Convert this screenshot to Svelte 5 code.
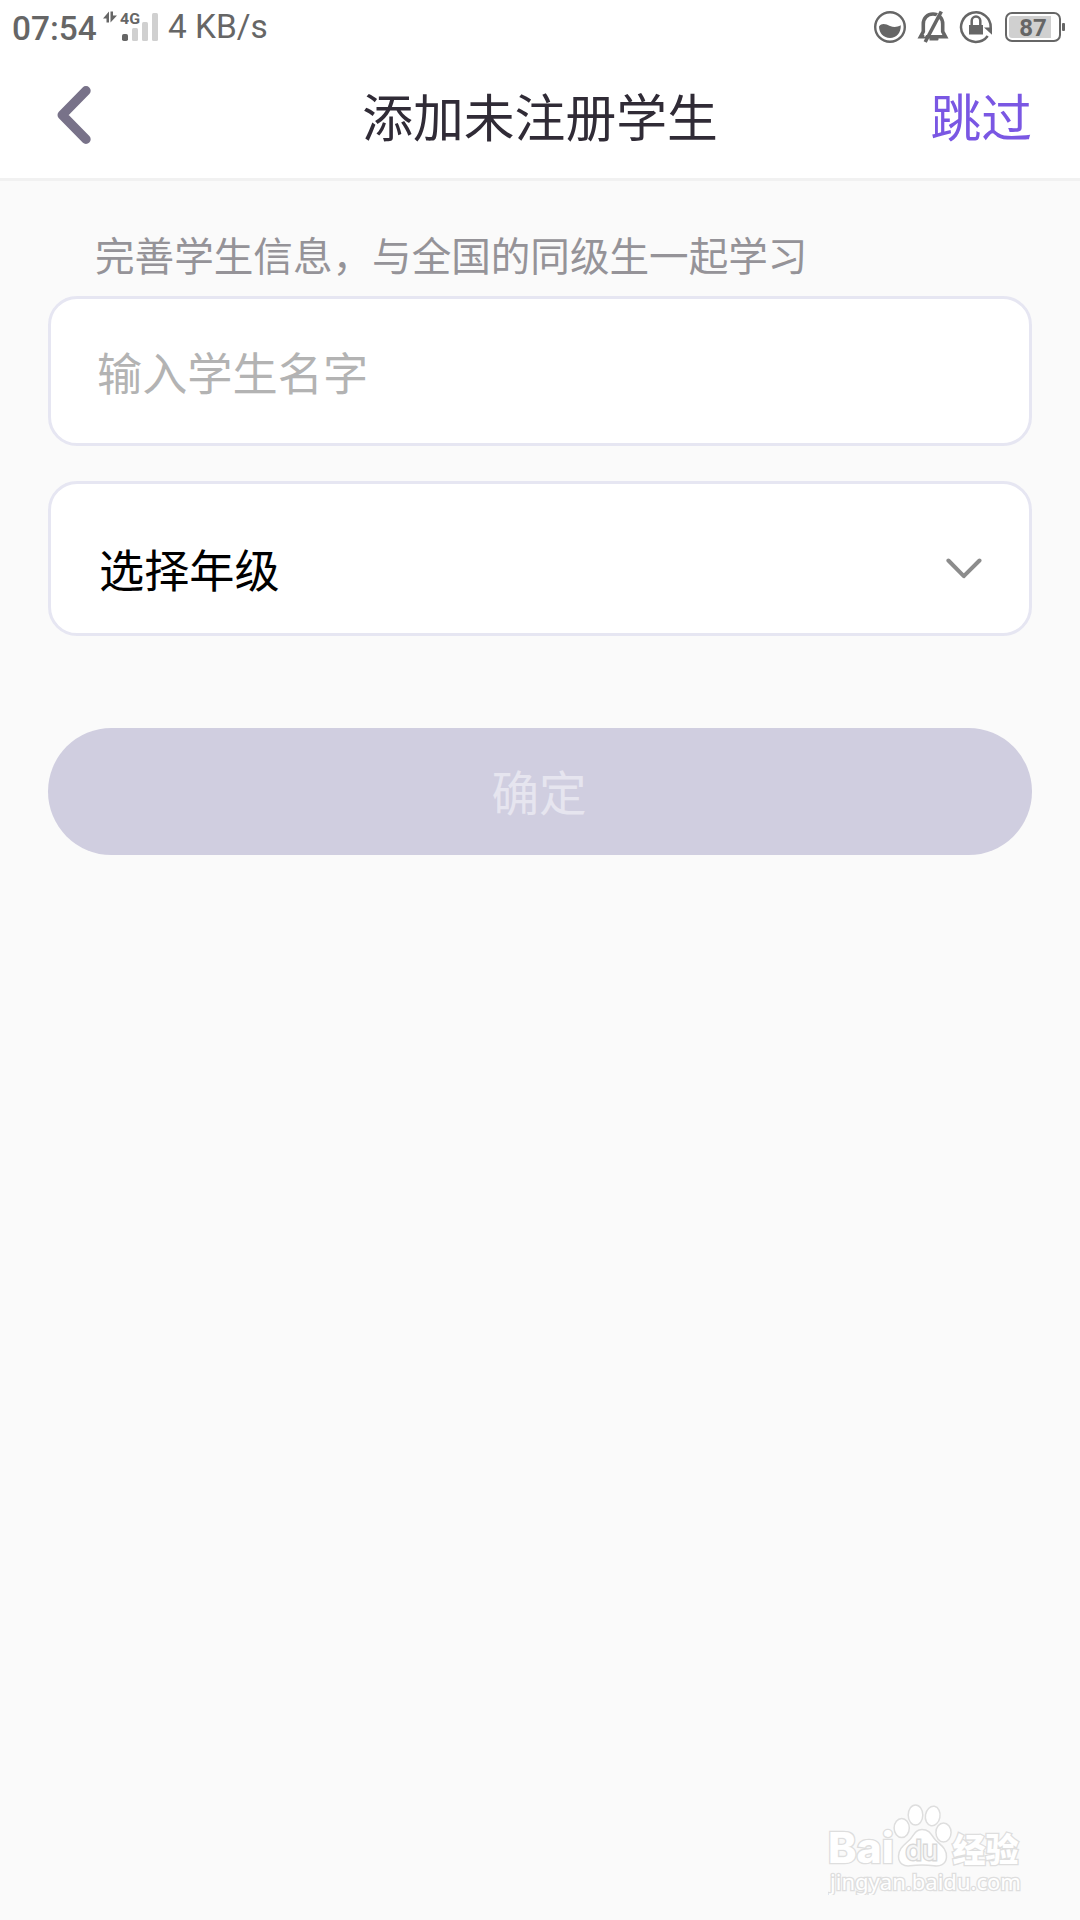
<script lang="ts">
  const title = "添加未注册学生";
  const speed = "4 KB/s";
  const battery = 87;

  let name = $state("");
  const ready = $derived(name.trim().length > 0);
</script>

<div class="screen">
  <div class="status">
    <span class="time">07:54</span>
    <svg class="signal" width="58" height="32" viewBox="0 0 58 32">
      <path d="M7 .5V11.500H4.500V7.500H1zM8.500 .5H11V4.500H15L8.500 11.500z" fill="#666" />
      <text x="18" y="13" class="net" textLength="20" lengthAdjust="spacingAndGlyphs">4G</text>
      <rect x="20" y="23" width="6" height="7" rx="1.8" fill="#666" />
      <rect x="30" y="17" width="6" height="13" rx="1.5" fill="#d0d0d0" />
      <rect x="40" y="11" width="6" height="19" rx="1.5" fill="#d0d0d0" />
      <rect x="50" y="2" width="6" height="28" rx="1.5" fill="#d0d0d0" />
    </svg>
    <span class="speed">{speed}</span>

    <div class="indicators">
      <svg width="34" height="34" viewBox="0 0 34 34">
        <circle cx="17" cy="17" r="14.800" fill="none" stroke="#666" stroke-width="2.400" />
        <path d="M6 16.500C9 12.500 13 14.300 17 16c4 1.600 7 1.200 10.800-.7C28 23 23.500 28 17 28S6 23 6 16.500z" fill="#666" />
      </svg>
      <svg width="34" height="34" viewBox="0 0 34 34">
        <path d="M4.500 26.800L7.300 21.500V14C7.300 8 11.500 4 17 4S26.700 8 26.700 14V21.500L29.500 26.800z" fill="none" stroke="#666" stroke-width="3.600" />
        <path d="M13.500 28h9v1.500q0 1-1 1h-8z" fill="#666" />
        <path d="M22.800 3L8.500 26.500" stroke="#fff" stroke-width="1.400" />
        <path d="M25.300 1.500L9.200 32" stroke="#666" stroke-width="3.600" />
      </svg>
      <svg width="34" height="34" viewBox="0 0 34 34">
        <path d="M31.600 18.500A14.800 14.800 0 1 0 28.700 26" fill="none" stroke="#666" stroke-width="2.500" />
        <path d="M25 17.500h8v7.300z" fill="#666" />
        <rect x="10" y="15" width="14" height="9.500" fill="#666" />
        <path d="M12.700 16V10.800a4.300 4.300 0 0 1 8.600 0V16" fill="none" stroke="#666" stroke-width="2.500" />
      </svg>
      <div class="battery">
        <div class="level" style:width="{battery}%"></div>
        <span>{battery}</span>
      </div>
    </div>
  </div>

  <header>
    <button class="back" aria-label="返回">
      <svg width="34" height="58" viewBox="0 0 34 58">
        <path d="M29 4.800L5.200 29L29 53.200" fill="none" stroke="#787289" stroke-width="9.400" stroke-linecap="round" stroke-linejoin="round" />
      </svg>
    </button>
    <h1>{title}</h1>
    <button class="skip">跳过</button>
  </header>

  <main>
    <p class="hint">完善学生信息，与全国的同级生一起学习</p>
    <input class="field" type="text" placeholder="输入学生名字" bind:value={name} />
    <button class="field grade">
      <span>选择年级</span>
      <svg width="36" height="22" viewBox="0 0 36 22">
        <path d="M2.400 2.500L17.800 18.200L33.500 2.500" fill="none" stroke="#8c8c8c" stroke-width="4" stroke-linecap="round" stroke-linejoin="round" />
      </svg>
    </button>
    <button class="confirm" class:ready>确定</button>
  </main>

  <svg class="mark" width="200" height="100" viewBox="0 0 200 100">
    <g fill="#fff" stroke="#dedede" stroke-width="1.500">
      <text x="0" y="68" class="brand" textLength="66" lengthAdjust="spacingAndGlyphs">Bai</text>
      <ellipse cx="73.700" cy="33" rx="7.600" ry="9.500" />
      <ellipse cx="87.500" cy="20" rx="7.300" ry="10" />
      <ellipse cx="104.700" cy="21" rx="7.300" ry="9.800" transform="rotate(10 104.700 21)" />
      <ellipse cx="115.500" cy="37.500" rx="7.600" ry="9.500" />
      <path d="M94 34.500c8 0 9.500 6 13.500 10.500c5 5 11.500 8.500 11 17c-.5 8-7 9.500-12.500 8.800c-8-1-16-1-24 0c-6 .7-11.500-2-11.500-9.500c0-8 6-11.500 11-16.300C86 40.500 87 34.500 94 34.500z" />
      <text x="77.500" y="65" class="du">du</text>
      <text x="124.500" y="67" class="cn">经验</text>
      <text x="2" y="95" class="site" textLength="191" lengthAdjust="spacingAndGlyphs">jingyan.baidu.com</text>
    </g>
  </svg>
</div>

<style>
  :global(body) {
    background: #fafafa;
  }

  .screen {
    position: relative;
    width: 1080px;
    height: 1920px;
    overflow: hidden;
    background: #fafafa;
    font-family: "Noto Sans CJK SC", sans-serif;
  }

  button {
    appearance: none;
    border: none;
    background: none;
    padding: 0;
    margin: 0;
    font-family: inherit;
    cursor: pointer;
  }
  svg {
    display: block;
    flex: none;
  }

  .status {
    display: flex;
    align-items: center;
    height: 54px;
    padding: 0 15px 0 12px;
    background: #fff;
    color: #666;
    font-family: Roboto, sans-serif;
    font-size: 33px;
  }
  .time {
    width: 90px;
    font-weight: 500;
    font-size: 33.4px;
    padding-top: 3px;
  }
  .signal {
    margin-top: 0;
  }
  .net {
    font: 700 15px Roboto, sans-serif;
    fill: #666;
  }
  .speed {
    margin-left: 8px;
    margin-top: -1px;
    font-size: 33.4px;
  }
  .indicators {
    display: flex;
    align-items: center;
    gap: 9px;
    margin-left: auto;
  }
  .battery {
    position: relative;
    box-sizing: border-box;
    width: 56px;
    height: 30px;
    margin-left: 3px;
    margin-right: 4px;
    padding: 2px;
    border: 2px solid #666;
    border-radius: 7px;
  }
  .battery::after {
    content: "";
    position: absolute;
    right: -6px;
    top: 9px;
    width: 3px;
    height: 8px;
    border-radius: 1px;
    background: #666;
  }
  .level {
    height: 100%;
    border-radius: 3px 0 0 3px;
    background: #d0d0d0;
  }
  .battery span {
    position: absolute;
    inset: 0;
    text-align: center;
    font-size: 24px;
    line-height: 28px;
    font-weight: 700;
  }

  header {
    display: flex;
    align-items: center;
    justify-content: space-between;
    box-sizing: border-box;
    height: 127px;
    padding: 0 48px 0 57px;
    background: #fff;
    border-bottom: 3px solid #f1f1f1;
  }
  .back,
  .skip {
    display: flex;
    width: 110px;
  }
  .back {
    margin-right: -9px;
    padding-bottom: 2px;
  }
  .skip {
    justify-content: flex-end;
    padding-bottom: 2px;
    color: #7a57e3;
    font-size: 50.8px;
    line-height: 74px;
  }
  h1 {
    margin: 0;
    padding-bottom: 2px;
    color: #302b36;
    font-size: 50.8px;
    font-weight: 400;
    line-height: 74px;
  }

  main {
    display: flex;
    flex-direction: column;
    padding: 43px 48px 0;
  }
  .hint {
    margin: 0 0 12px;
    padding-left: 47px;
    color: #959398;
    font-size: 39.6px;
    line-height: 60px;
    white-space: nowrap;
  }
  .field {
    box-sizing: border-box;
    width: 984px;
    height: 150px;
    padding: 0 46px;
    background: #fff;
    border: 3px solid #e6e6f2;
    border-radius: 29px;
    font-family: inherit;
    font-size: 45.2px;
    outline: none;
  }
  .field::placeholder {
    color: #b3b3b3;
    opacity: 1;
  }
  .grade {
    display: flex;
    align-items: center;
    justify-content: space-between;
    height: 155px;
    margin-top: 35px;
    padding: 20px 47px 0 48px;
    color: #000;
  }
  .confirm {
    height: 127px;
    margin-top: 92px;
    padding: 0 2px 2px 0;
    border-radius: 64px;
    background: #d0cee0;
    color: #e6e5ef;
    font-size: 47.6px;
  }
  .confirm.ready {
    background: #7a57e3;
    color: #fff;
  }

  /* Corner mark floats over the empty lower part of the page. */
  .mark {
    position: absolute;
    left: 828px;
    top: 1795px;
  }
  .mark text {
    paint-order: stroke;
    stroke-width: 2.6px;
  }
  .brand {
    font: 800 42px Inter, sans-serif;
  }
  .mark .du {
    font: 400 27px Inter, sans-serif;
    stroke-width: 2.8px;
    stroke: #d8d8d8;
    fill: #f6f6f6;
  }
  .cn {
    font: 900 33px "Noto Sans CJK SC", sans-serif;
  }
  .site {
    font: 400 21px "Noto Sans", sans-serif;
  }
</style>
